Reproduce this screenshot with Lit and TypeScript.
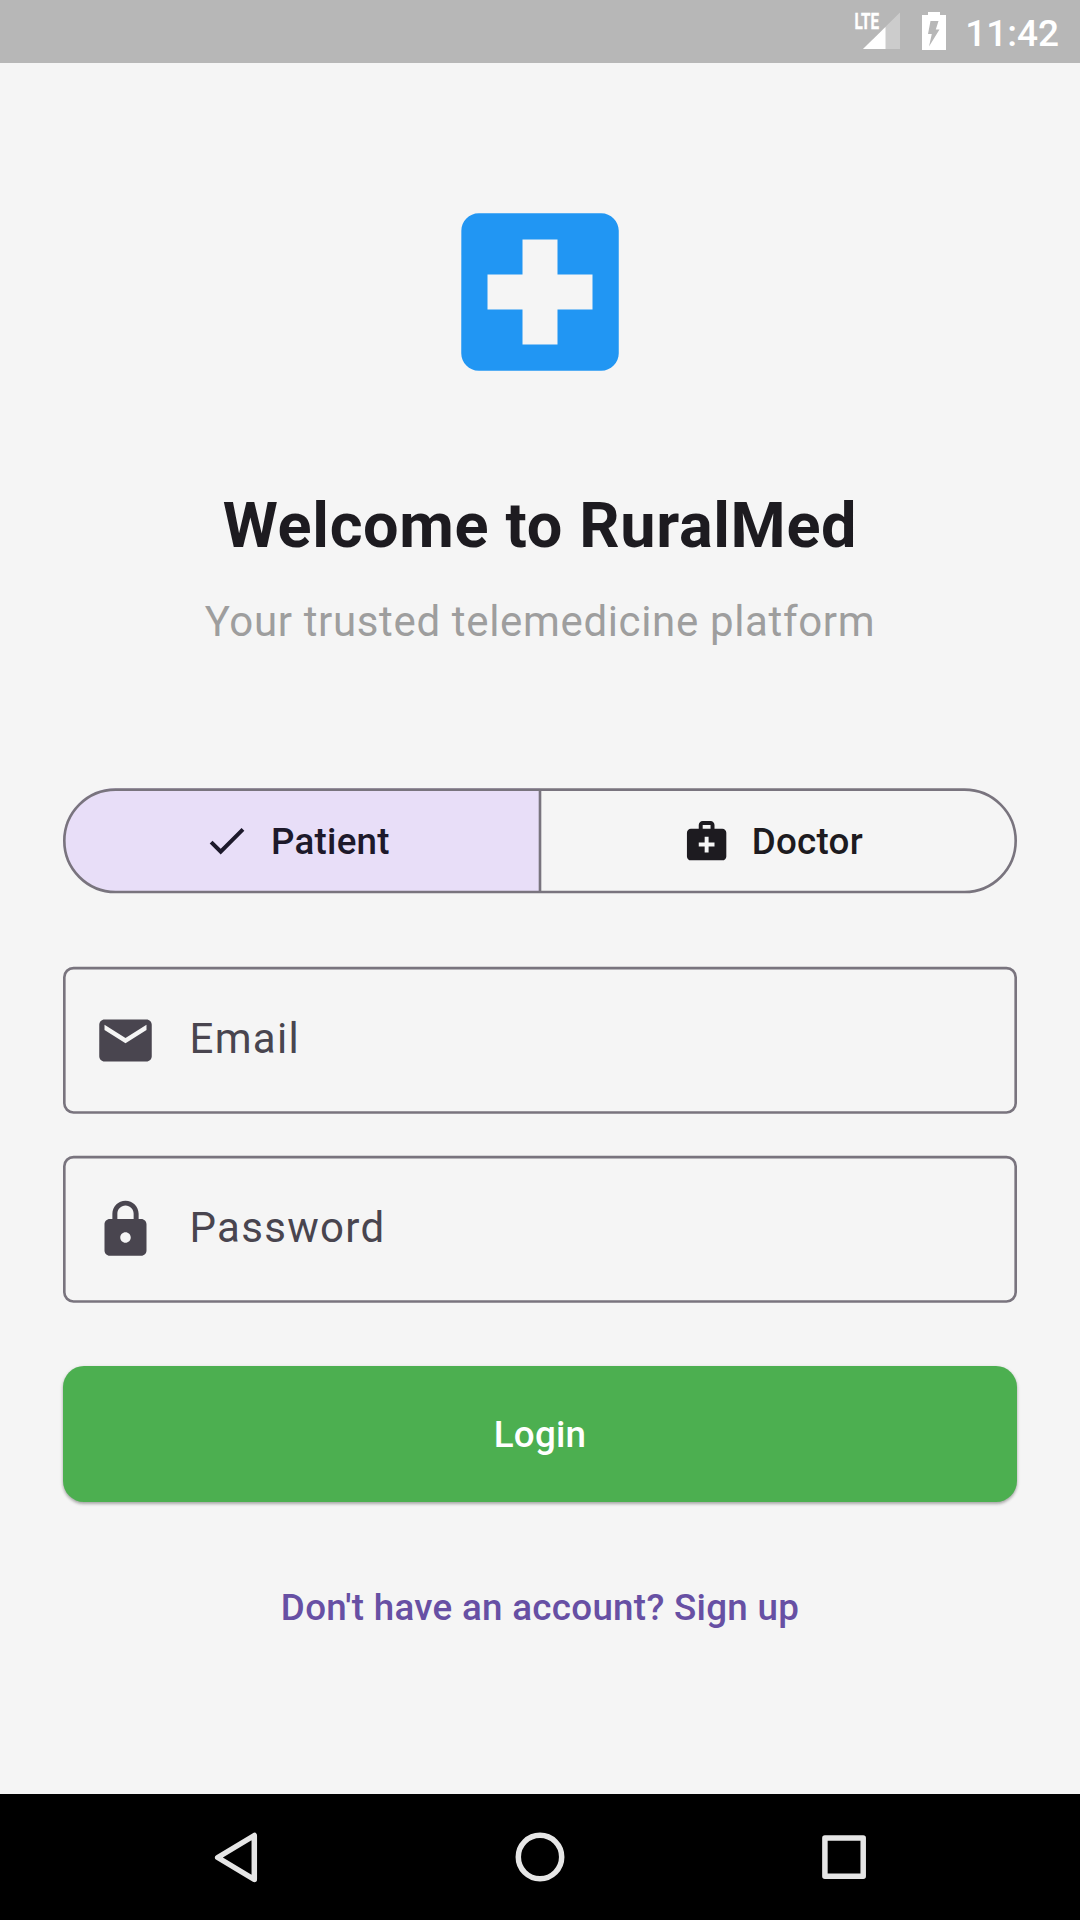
import { LitElement, html, css, svg } from "lit";
import { customElement, property, state } from "lit/decorators.js";

const icons = {
  hospital: svg`<path d="M19 3H5c-1.1 0-1.99.9-1.99 2L3 19c0 1.1.9 2 2 2h14c1.1 0 2-.9 2-2V5c0-1.1-.9-2-2-2zm-1 11h-4v4h-4v-4H6v-4h4V6h4v4h4v4z"/>`,
  check: svg`<path d="M9 16.17L4.83 12l-1.42 1.41L9 19 21 7l-1.41-1.41z"/>`,
  bag: svg`<path d="M20 6h-4V4c0-1.1-.9-2-2-2h-4c-1.1 0-2 .9-2 2v2H4c-1.1 0-2 .9-2 2v12c0 1.1.9 2 2 2h16c1.1 0 2-.9 2-2V8c0-1.1-.9-2-2-2zM10 4h4v2h-4V4zm6 11h-3v3h-2v-3H8v-2h3v-3h2v3h3v2z"/>`,
  mail: svg`<path d="M20 4H4c-1.1 0-1.99.9-1.99 2L2 18c0 1.1.9 2 2 2h16c1.1 0 2-.9 2-2V6c0-1.1-.9-2-2-2zm0 4l-8 5-8-5V6l8 5 8-5v2z"/>`,
  lock: svg`<path d="M18 8h-1V6c0-2.76-2.24-5-5-5S7 3.24 7 6v2H6c-1.1 0-2 .9-2 2v10c0 1.1.9 2 2 2h12c1.1 0 2-.9 2-2V10c0-1.1-.9-2-2-2zm-6 9c-1.1 0-2-.9-2-2s.9-2 2-2 2 .9 2 2-.9 2-2 2zm3.1-9H8.9V6c0-1.71 1.39-3.1 3.1-3.1 1.71 0 3.1 1.39 3.1 3.1v2z"/>`,
};

type IconName = keyof typeof icons;

@customElement("md-icon")
class MdIcon extends LitElement {
  @property() name: IconName = "check";

  static styles = css`
    :host { display: block; flex: none; }
    .glyph { display: block; width: 100%; height: 100%; fill: currentColor; }
  `;

  render() {
    return html`<svg class="glyph" viewBox="0 0 24 24">${icons[this.name]}</svg>`;
  }
}

@customElement("status-bar")
class StatusBar extends LitElement {
  static styles = css`
    :host {
      display: flex; justify-content: flex-end; align-items: flex-start;
      box-sizing: border-box; height: 63px; padding-right: 21px;
      background: #b7b7b7; color: #fff;
    }
    .signal { display: block; width: 48px; height: 40px; margin: 11px 21px 0 0; overflow: visible; }
    .network { font: 700 22px Roboto, sans-serif; fill: #fff; stroke: #fff; stroke-width: .4px; }
    .battery { display: block; width: 24px; height: 38px; margin: 12px 19px 0 0; }
    .time { font: 500 37px/63px Roboto, sans-serif; margin-top: 2px; }
  `;

  render() {
    return html`
      <svg class="signal" viewBox="0 0 48 40">
        <path d="M47 1.5V38H10z" fill="#fff" fill-opacity=".3"/>
        <path d="M0 0H26.500V19.500H29L20 28.500L0 28.500z" fill="#b7b7b7"/>
        <path d="M32.500 16V38H10z" fill="#fff"/>
        <text class="network" x="1.500" y="18.300" textLength="24.500" lengthAdjust="spacingAndGlyphs">LTE</text>
      </svg>
      <svg class="battery" viewBox="0 0 24 38">
        <path d="M6 0H18V3H24V38H0V3H6z" fill="#fff"/>
        <path d="M8.500 9H16.500L13.800 17.500H17.500L7 34.500L9.800 22H6z" fill="#b7b7b7"/>
      </svg>
      <span class="time">11:42</span>
    `;
  }
}

@customElement("nav-bar")
class NavBar extends LitElement {
  static styles = css`
    :host {
      display: flex; justify-content: space-between; align-items: center;
      box-sizing: border-box; height: 126px; padding: 0 204px; background: #000;
    }
    .key { display: block; width: 64px; height: 64px; fill: none; stroke: #e6e6e6; stroke-width: 5.5; stroke-linejoin: round; }
  `;

  render() {
    return html`
      <svg class="key" viewBox="0 0 64 64"><path d="M50.300 10.500V54.500L13.700 32.500z"/></svg>
      <svg class="key" viewBox="0 0 64 64"><circle cx="32" cy="32" r="21.700"/></svg>
      <svg class="key" viewBox="0 0 64 64"><rect x="12.900" y="13" width="38.300" height="38.300"/></svg>
    `;
  }
}

@customElement("app-root")
class AppRoot extends LitElement {
  @state() private role = "Patient";

  static styles = css`
    :host {
      display: flex; flex-direction: column; width: 100%; height: 100vh; overflow: hidden;
      background: #f5f5f5; color: #1d1b20; font-family: Roboto, sans-serif;
    }
    .content {
      flex: 1; min-height: 0; padding: 0 63px;
      display: flex; flex-direction: column; justify-content: center; align-items: stretch;
    }
    .logo { width: 210px; height: 210px; align-self: center; color: #2196f3; }
    .title {
      margin: 84px 0 0; text-align: center; font-size: 63px; font-weight: 700;
      line-height: 90.09px; letter-spacing: 0.656px;
    }
    .subtitle {
      margin: 21px 0 0; text-align: center; font-size: 42px; font-weight: 400;
      line-height: 60.06px; letter-spacing: 0.656px; color: #9e9e9e;
    }
    .outline {
      position: absolute; inset: 0; width: 100%; height: 100%; overflow: visible;
      fill: none; stroke: #79747e; stroke-width: 2.625px; pointer-events: none;
    }
    .outline-shape { x: 1.3125px; width: calc(100% - 2.625px); height: calc(100% - 2.625px); }
    .roles { position: relative; margin-top: 136.5px; height: 105px; display: flex; }
    .roles .outline-shape { y: 1.6px; rx: 51.2px; }
    .role {
      flex: 1; display: flex; justify-content: center; align-items: center; gap: 21px;
      border: 0; padding: 0 10.5px 0 0; margin: 0; background: none; color: #1d1b20;
      font: 500 36.75px/52.5px Roboto, sans-serif; letter-spacing: 0.2625px;
    }
    .role:first-child { border-radius: 52.5px 0 0 52.5px; }
    .role:nth-child(2) { border-radius: 0 52.5px 52.5px 0; }
    .role.selected { background: #e8def8; color: #1d192b; }
    .role-icon { width: 47.25px; height: 47.25px; }
    .role-label { padding-top: 2px; }
    .field {
      position: relative; height: 147px; box-sizing: border-box; display: flex; align-items: center; gap: 32.5px;
      padding: 0 31px; color: #49454f; font-size: 42px; line-height: 63px; letter-spacing: 1.3125px;
    }
    .field .outline-shape { y: 1.1px; rx: 9.2px; }
    .field-label { padding-bottom: 4px; }
    .email { margin-top: 73.5px; }
    .password { margin-top: 42px; }
    .field-icon { width: 63px; height: 63px; }
    .login {
      margin: 63px 0 0; height: 136.5px; flex: none; border: 0; padding: 2px 0 0; border-radius: 21px;
      background: #4caf50; color: #fff; font: 500 36.75px/52.5px Roboto, sans-serif; letter-spacing: 0.2625px;
      box-shadow: 0 2px 3px rgba(0, 0, 0, .26), 0 1px 4px rgba(0, 0, 0, .1);
    }
    .signup {
      margin: 42px 0 0; height: 126px; border: 0; padding: 2px 0 0; background: none; color: #6750a4;
      font: 500 36.75px/52.5px Roboto, sans-serif; letter-spacing: 0.29px;
    }
  `;

  private renderRole(label: string, icon: IconName) {
    const selected = this.role === label;
    return html`
      <button class="role ${selected ? "selected" : ""}" @click=${() => (this.role = label)}>
        <md-icon class="role-icon" .name=${selected ? "check" : icon}></md-icon>
        <span class="role-label">${label}</span>
      </button>
    `;
  }

  private renderField(label: string, icon: IconName) {
    return html`
      <div class="field ${label.toLowerCase()}">
        <md-icon class="field-icon" .name=${icon}></md-icon>
        <span class="field-label">${label}</span>
        <svg class="outline"><rect class="outline-shape"/></svg>
      </div>
    `;
  }

  render() {
    return html`
      <status-bar></status-bar>
      <main class="content">
        <md-icon class="logo" .name=${"hospital"}></md-icon>
        <h1 class="title">Welcome to RuralMed</h1>
        <p class="subtitle">Your trusted telemedicine platform</p>
        <div class="roles">
          ${this.renderRole("Patient", "check")}
          ${this.renderRole("Doctor", "bag")}
          <svg class="outline">
            <rect class="outline-shape"/>
            <line x1="50%" x2="50%" y1="1.5" y2="104"/>
          </svg>
        </div>
        ${this.renderField("Email", "mail")}
        ${this.renderField("Password", "lock")}
        <button class="login">Login</button>
        <button class="signup">Don't have an account? Sign up</button>
      </main>
      <nav-bar></nav-bar>
    `;
  }
}
